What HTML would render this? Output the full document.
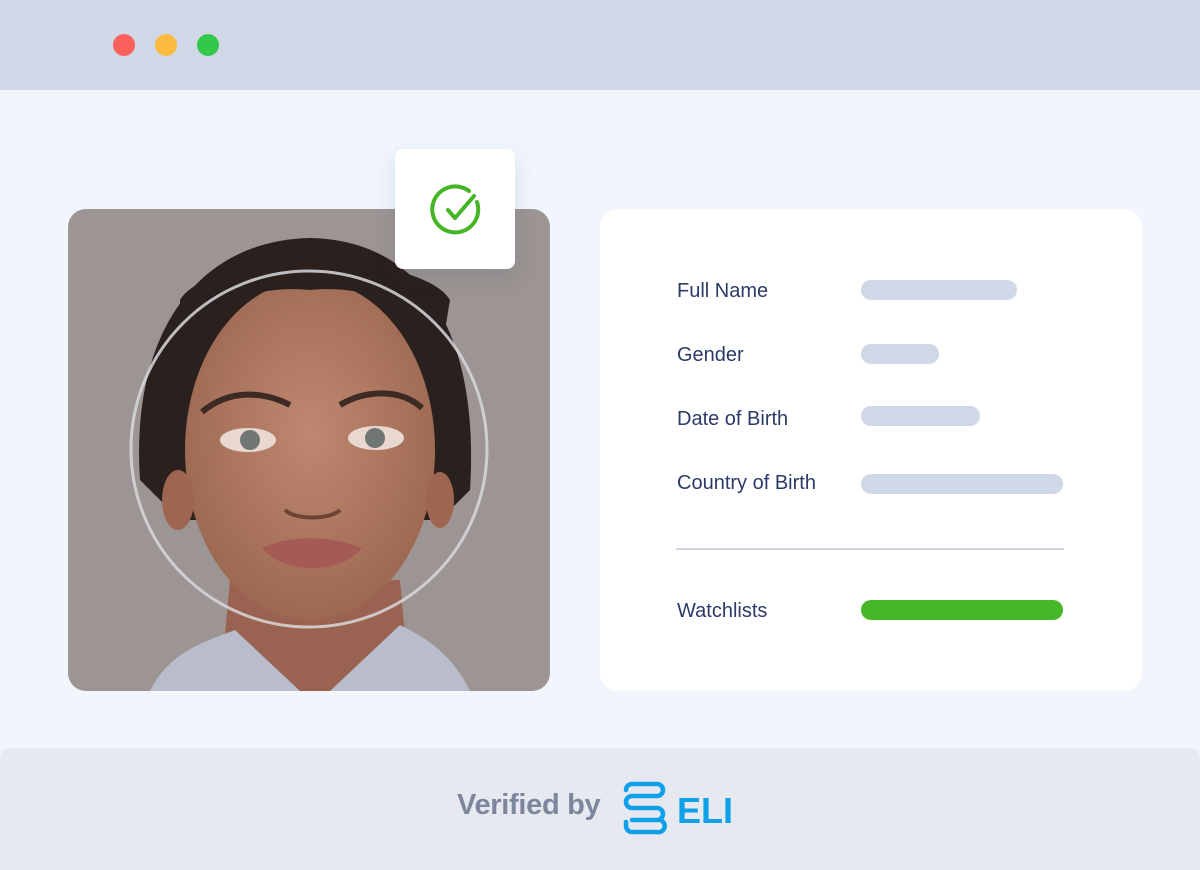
<!DOCTYPE html>
<html><head><meta charset="utf-8"><style>
*{margin:0;padding:0;box-sizing:border-box}
body{width:1200px;height:870px;background:#f1f6fd;font-family:"Liberation Sans",sans-serif;position:relative;overflow:hidden}
.top{position:absolute;left:0;top:0;width:1200px;height:90px;background:#d0d7e7}
.dot{position:absolute;top:34px;width:22px;height:22px;border-radius:50%}
.card{position:absolute;left:600px;top:209px;width:542px;height:482px;background:#fff;border-radius:18px}
.lbl{position:absolute;left:677px;font-size:20px;color:#2b3a68}
.bar{position:absolute;left:861px;height:20px;border-radius:10px;background:#d0d7e6}
.foot{position:absolute;left:0;top:748px;width:1200px;height:122px;background:#e6e9ef;border-radius:10px 10px 0 0}
.ver{position:absolute;left:457px;top:789px;font-size:29px;color:#7d869c;font-weight:bold;letter-spacing:-0.3px}
.eli{position:absolute;left:677px;top:790px;font-size:36px;color:#0ea0e8;font-weight:bold;letter-spacing:0}
.chk{position:absolute;left:395px;top:149px;width:120px;height:120px;background:#fff;border-radius:8px;box-shadow:0 8px 24px rgba(40,50,80,.12)}
</style></head><body>
<div class="top"></div>
<div class="dot" style="left:113px;background:#fc605c"></div>
<div class="dot" style="left:155px;background:#fdbc40"></div>
<div class="dot" style="left:197px;background:#34c84a"></div>

<svg style="position:absolute;left:0;top:0" width="1200" height="870">
<defs><clipPath id="c"><rect x="68" y="209" width="482" height="482" rx="18"/></clipPath>
<radialGradient id="sk" cx="0.5" cy="0.45" r="0.6"><stop offset="0" stop-color="#bf8870"/><stop offset="1" stop-color="#9a654f"/></radialGradient></defs>
<g clip-path="url(#c)">
<rect x="68" y="209" width="482" height="482" fill="#9c9593"/>
<path d="M140 480 C130 330 200 240 310 238 C420 240 480 330 470 490 L440 520 L180 520 Z" fill="#2a201e"/>
<path d="M230 580 L400 580 L410 691 L220 691 Z" fill="#9a6250"/>
<path d="M150 691 C170 650 210 640 235 630 L300 691 Z M470 691 C450 650 420 635 400 625 L330 691 Z" fill="#b8bccb"/>
<ellipse cx="310" cy="450" rx="125" ry="170" fill="url(#sk)"/>
<path d="M180 360 C200 300 260 285 310 290 C360 285 420 300 440 360 L450 300 C420 250 210 250 180 300 Z" fill="#2a201e"/>
<ellipse cx="178" cy="500" rx="16" ry="30" fill="#9e6651"/>
<ellipse cx="440" cy="500" rx="14" ry="28" fill="#9e6651"/>
<path d="M202 412 C230 388 265 392 290 405" stroke="#3e2a24" stroke-width="6" fill="none"/>
<path d="M340 405 C365 390 400 388 422 408" stroke="#3e2a24" stroke-width="6" fill="none"/>
<ellipse cx="248" cy="440" rx="28" ry="12" fill="#e8d8d0"/>
<circle cx="250" cy="440" r="10" fill="#6f7673"/>
<ellipse cx="376" cy="438" rx="28" ry="12" fill="#e8d8d0"/>
<circle cx="375" cy="438" r="10" fill="#6f7673"/>
<path d="M285 510 C295 520 330 520 340 510" stroke="#6e4334" stroke-width="4" fill="none"/>
<path d="M262 548 C290 535 330 535 362 548 C340 575 285 575 262 548 Z" fill="#a55b55"/>
</g>
<circle cx="309" cy="449" r="178" fill="none" stroke="#d8d8dc" stroke-width="3" opacity=".85"/>
</svg>

<div class="chk"><svg width="120" height="120"><path d="M477 202 A23 23 0 1 1 469 191" transform="translate(-395,-149)" fill="none" stroke="#45b526" stroke-width="4" stroke-linecap="round"/><path d="M448 210 L455 218 L474 196" transform="translate(-395,-149)" fill="none" stroke="#45b526" stroke-width="4" stroke-linecap="round" stroke-linejoin="round"/></svg></div>

<div class="card"></div>
<div class="lbl" style="top:280px">Full Name</div>
<div class="bar" style="top:280px;width:156px"></div>
<div class="lbl" style="top:344px">Gender</div>
<div class="bar" style="top:344px;width:78px"></div>
<div class="lbl" style="top:408px">Date of Birth</div>
<div class="bar" style="top:406px;width:119px"></div>
<div class="lbl" style="top:472px">Country of Birth</div>
<div class="bar" style="top:474px;width:202px"></div>
<div style="position:absolute;left:676px;top:548px;width:388px;height:2px;background:#d0d6e2"></div>
<div class="lbl" style="top:600px">Watchlists</div>
<div class="bar" style="top:600px;width:202px;background:#46b828"></div>

<div class="foot"></div>
<div class="ver">Verified by</div>
<svg style="position:absolute;left:0;top:0" width="1200" height="870"><path d="M632 784 H657 A6 6 0 0 1 657 796 H632 A6 6 0 0 0 632 808 H657 A6 6 0 0 1 657 820 H632 M626 822 V826 A6 6 0 0 0 632 832 H657 A6 6 0 0 0 660 820" fill="none" stroke="#0ea0e8" stroke-width="4.5" stroke-linecap="round"/><path d="M632 784 A6 6 0 0 0 626 790" fill="none" stroke="#0ea0e8" stroke-width="4.5" stroke-linecap="round"/></svg>
<div class="eli">ELI</div>
</body></html>
